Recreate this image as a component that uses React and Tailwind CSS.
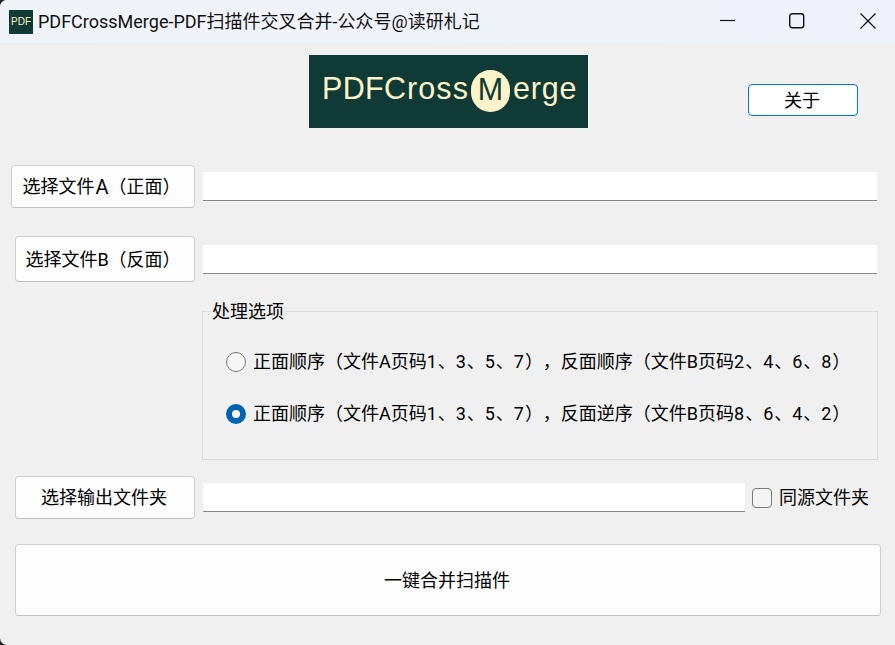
const FONT = { fontFamily: 'Roboto, "Noto Sans CJK SC", sans-serif' };

function Field({ className = "" }) {
  return <div className={`h-[29px] bg-white border-b border-[#868686] ${className}`} />;
}

function Btn({ className = "", children }) {
  return (
    <button className={`flex items-center justify-center bg-[#fdfdfd] border border-[#d0d0d0] border-b-[#c0c0c0] rounded-[4px] pr-[2px] text-[18px] text-black whitespace-nowrap ${className}`}>
      {children}
    </button>
  );
}

function Pages({ a, b, c, d }) {
  return (
    <>
      {[a, b, c, d].map((n, i) => (
        <span key={i}>
          <span className="tracking-[0.9px]">{n}</span>
          {i < 3 ? "、" : ""}
        </span>
      ))}
    </>
  );
}

function Radio({ checked, children, className = "" }) {
  return (
    <div className={`flex items-center h-[24px] ${className}`}>
      {checked ? (
        <span className="w-[20px] h-[20px] rounded-full border-[6px] border-[#0063b1] bg-white" />
      ) : (
        <span className="w-[20px] h-[20px] rounded-full border border-[#7a7a7a] bg-[#f6f6f6]" />
      )}
      <span className="ml-[7px] text-[18px] leading-[24px] text-black whitespace-nowrap">{children}</span>
    </div>
  );
}

export default function App() {
  return (
    <div className="w-[895px] h-[645px] bg-[#222222]">
      <div className="w-[895px] h-[645px] bg-[#f0f0f0] rounded-tl-[7px] rounded-bl-[7px] overflow-hidden flex flex-col [text-spacing-trim:space-all]" style={FONT}>
        <div className="h-[43px] bg-gradient-to-r from-[#f0f4f9] to-[#eff2fa] flex items-center">
          <div className="ml-[9px] w-[24px] h-[24px] bg-[#103a36] flex items-center justify-center text-[10px] leading-none text-[#fdf3c8]" style={{ fontFamily: '"Liberation Sans", sans-serif' }}>
            PDF
          </div>
          <span className="ml-[5px] mb-[1px] text-[18px] text-[#111] whitespace-nowrap">PDFCrossMerge-PDF扫描件交叉合并-公众号@读研札记</span>
          <div className="ml-auto mb-[2px] flex items-center">
            <svg width="16" height="16" viewBox="0 0 16 16" className="mr-[53px]" fill="none" stroke="#111" strokeWidth="1.2"><path d="M0 7.5H15" /></svg>
            <svg width="16" height="16" viewBox="0 0 16 16" className="mr-[55px]" fill="none" stroke="#111" strokeWidth="1.4"><rect x="0.7" y="0.7" width="14" height="14" rx="2.5" /></svg>
            <svg width="16" height="16" viewBox="0 0 16 16" className="mr-[19px]" fill="none" stroke="#111" strokeWidth="1.2"><path d="M0.5 0.5L15.5 15.5M15.5 0.5L0.5 15.5" /></svg>
          </div>
        </div>

        <div className="mt-[12px] h-[73px] flex items-start">
          <div className="ml-[309px] w-[279px] h-[73px] bg-[#103a36] flex items-center text-[#fdf3c8] text-[30.5px] leading-none whitespace-nowrap" style={{ fontFamily: '"Liberation Sans", sans-serif' }}>
            <span className="ml-[13px] mb-[6px] w-[149px] flex">
              <span className="tracking-[0.3px]">PDF</span>
              <span className="tracking-[1.1px]">Cross</span>
            </span>
            <span className="mb-[2px] w-[39px] h-[42px] rounded-full bg-[#fdf3c8] text-[#103a36] flex items-center justify-center pb-[3px]">M</span>
            <span className="ml-[3px] mb-[6px] tracking-[0.8px]">erge</span>
          </div>
          <Btn className="ml-[160px] mt-[29px] w-[110px] h-[32px] !bg-white !border-[#0078d4]">关于</Btn>
        </div>

        <div className="mt-[37px] flex items-center">
          <Btn className="ml-[11px] w-[184px] h-[43px] !pr-[3px]">选择文件<span className="ml-px text-[20px] leading-none">A</span>（正面）</Btn>
          <Field className="ml-[8px] w-[674px]" />
        </div>

        <div className="mt-[28px] flex items-center">
          <Btn className="ml-[15px] w-[180px] h-[46px] !pr-[4px]">选择文件B（反面）</Btn>
          <Field className="ml-[8px] w-[674px]" />
        </div>

        <div className="relative mt-[29px] ml-[202px] w-[676px] h-[149px] border border-[#dcdcdc] pt-[38px] pl-[23px]">
          <span className="absolute left-[8px] top-[-11px] px-px bg-[#f0f0f0] text-[18px] leading-[22px] text-black">处理选项</span>
          <Radio>正面顺序（文件A页码<Pages a="1" b="3" c="5" d="7" />），反面顺序（文件B页码<Pages a="2" b="4" c="6" d="8" />）</Radio>
          <Radio checked className="mt-[28px]">正面顺序（文件A页码<Pages a="1" b="3" c="5" d="7" />），反面逆序（文件B页码<Pages a="8" b="6" c="4" d="2" />）</Radio>
        </div>

        <div className="mt-[16px] flex items-center">
          <Btn className="ml-[15px] w-[180px] h-[43px]">选择输出文件夹</Btn>
          <Field className="ml-[8px] w-[542px]" />
          <span className="ml-[7px] w-[20px] h-[20px] rounded-[4px] border border-[#7a7a7a] bg-[#f4f4f4]" />
          <span className="ml-[7px] text-[18px] text-black whitespace-nowrap">同源文件夹</span>
        </div>

        <Btn className="mt-[25px] ml-[15px] w-[866px] h-[72px]">一键合并扫描件</Btn>
      </div>
    </div>
  );
}
